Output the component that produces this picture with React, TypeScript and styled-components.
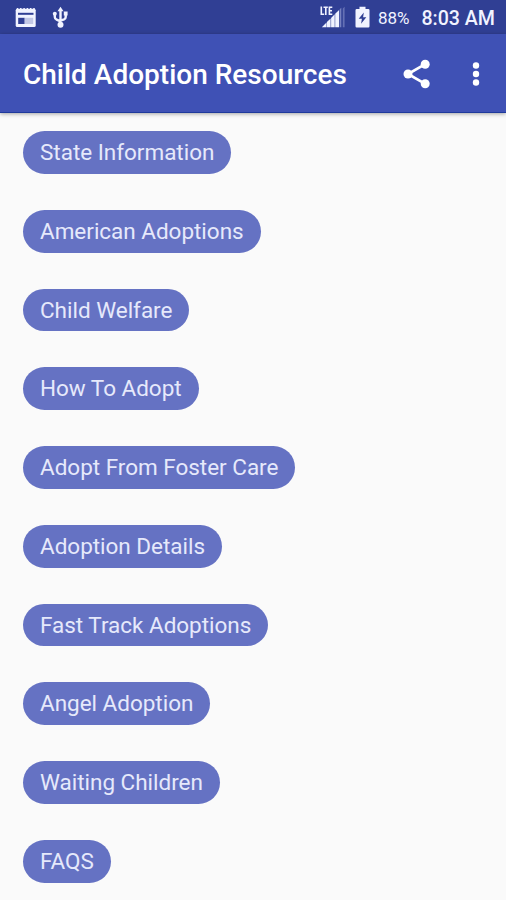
import React from "react";
import styled, { createGlobalStyle } from "styled-components";

const GlobalStyle = createGlobalStyle`
  * { box-sizing: border-box; }
  html, body { margin: 0; background: #fafafa; }
  body { font-family: Roboto, "Liberation Sans", sans-serif; overflow: hidden; }
`;

const Screen = styled.div`
  width: 506px;
  height: 900px;
  display: flex;
  flex-direction: column;
  overflow: hidden;
  background: #fafafa;
`;

const StatusBar = styled.header`
  height: 34px;
  flex: none;
  display: flex;
  align-items: center;
  padding: 0 11px 0 15px;
  background: #303f94;
  color: #f1f3ff;
`;

const StatusIcon = styled.svg<{ $gap: number }>`
  display: block;
  flex: none;
  margin-right: ${(p) => p.$gap}px;
`;

const Spacer = styled.div`
  flex: 1;
`;

const Battery = styled.span`
  width: 43.5px;
  font-size: 17px;
  line-height: 34px;
  padding-top: 2px;
  white-space: nowrap;
`;

const Clock = styled.time`
  font-size: 19.6px;
  font-weight: 500;
  line-height: 34px;
  padding-top: 4px;
  white-space: nowrap;
`;

const AppBar = styled.div`
  height: 79px;
  flex: none;
  display: flex;
  align-items: center;
  padding: 0 15px 0 23px;
  background: #3f51b5;
  border-bottom: 1px solid #1f3a9c;
  box-shadow: 0 1px 4px rgba(0, 0, 0, 0.35);
  z-index: 1;
`;

const Title = styled.h1`
  flex: 1;
  margin: 0;
  padding-top: 4px;
  font-size: 28px;
  font-weight: 500;
  line-height: 34px;
  color: #fff;
  white-space: nowrap;
`;

const IconButton = styled.button<{ $width: number }>`
  width: ${(p) => p.$width}px;
  height: 40px;
  padding: 1px 0 0;
  border: 0;
  background: none;
  display: flex;
  align-items: center;
  justify-content: center;
`;

const Actions = styled.div`
  display: flex;
  gap: 28px;
`;

const List = styled.main`
  display: flex;
  flex-direction: column;
  align-items: flex-start;
  gap: 36px;
  padding: 18px 23px;
`;

const Pill = styled.button`
  height: 42.75px;
  flex: none;
  padding: 0 17px 0.3px;
  border: 0;
  border-radius: 22px;
  background: #6572c3;
  color: #e6e9fb;
  font-family: inherit;
  font-size: 22.5px;
  letter-spacing: -0.02px;
  line-height: 28px;
  white-space: nowrap;
`;

const RESOURCES = [
  "State Information",
  "American Adoptions",
  "Child Welfare",
  "How To Adopt",
  "Adopt From Foster Care",
  "Adoption Details",
  "Fast Track Adoptions",
  "Angel Adoption",
  "Waiting Children",
  "FAQS",
];

const CalendarIcon = () => (
  <StatusIcon $gap={15} width="22" height="22" viewBox="0 0 22 22">
    <path d="M2.500 2v1.500M5.800 2v1.500M9.100 2v1.500M12.400 2v1.500M15.700 2v1.500M19 2v1.500" stroke="#f1f3ff" strokeWidth="1.500" />
    <rect x="0.700" y="2.800" width="20" height="18.200" rx="1.500" fill="#f1f3ff" />
    <rect x="3" y="6.800" width="15.500" height="2" fill="#303f94" />
    <rect x="3.200" y="11.800" width="6.500" height="6.200" fill="#303f94" />
    <rect x="9.700" y="11.800" width="8.500" height="6.200" fill="#c3c8e6" />
  </StatusIcon>
);

const UsbIcon = () => (
  <StatusIcon $gap={0} width="17" height="24" viewBox="0 0 17 24">
    <g fill="none" stroke="#f1f3ff" strokeWidth="2.400">
      <path d="M8.500 4v16M2.800 9v3q0 2 1.800 2.700l3.900 1.700M13.700 8v4q0 1.800-1.600 2.400l-3.600 1.200" />
    </g>
    <g fill="#f1f3ff">
      <path d="M8.500 1.800l3 4.400h-6z" />
      <circle cx="2.800" cy="8.800" r="2" />
      <path d="M11.800 6.500h3.800v4h-3.800z" />
      <circle cx="8.500" cy="19.800" r="3" />
    </g>
  </StatusIcon>
);

const SignalIcon = () => (
  <StatusIcon $gap={9} width="26" height="24" viewBox="0 0 26 24">
    <g fill="none" stroke="#f1f3ff" strokeWidth="1.600">
      <path d="M1.300 1.500v7.700h2.900M3.500 2.300h4.300M5.800 2.300V10M12.300 2.300H9.400v6.900h2.900M9.400 5.800h2.600" />
    </g>
    <g fill="#f1f3ff">
      <path d="M1.800 22.200l4.700-4.700v4.700zM6.900 17.100l3.700-3.700v8.800H6.900zM11.100 12.900l3.600-3.600v12.900h-3.600zM15.200 8.800l3.900-3.900v17.300h-3.900z" />
    </g>
    <path d="M19.700 4.300l1.600-1.600v19.500h-1.600z" fill="#7681c0" />
    <path d="M22.800 3.500l1.800-1.800v20.500h-1.800z" fill="#6470b4" />
  </StatusIcon>
);

const BatteryIcon = () => (
  <StatusIcon $gap={8} width="15" height="22" viewBox="0 0 15 22">
    <path d="M4.500 .7h6v2.300h2.800q1.200 0 1.200 1.200v16q0 1.200-1.200 1.200H1.700Q.5 21.400.5 20.200v-16Q.5 3 1.700 3h2.800z" fill="#f1f3ff" />
    <path d="M8.800 6.500L3.700 12.700h3.200l-.8 5L11.300 11.200H8.100z" fill="#303f94" />
  </StatusIcon>
);

const ShareIcon = () => (
  <svg width="28" height="32" viewBox="0 0 28 32">
    <path d="M22.200 6.200L5 16l17.200 9.800" fill="none" stroke="#fff" strokeWidth="2.700" />
    <g fill="#fff">
      <circle cx="22.200" cy="6.200" r="4.500" />
      <circle cx="5" cy="16" r="4.500" />
      <circle cx="22.200" cy="25.800" r="4.500" />
    </g>
  </svg>
);

const MoreIcon = () => (
  <svg width="8" height="28" viewBox="0 0 8 28" fill="#fff">
    <circle cx="4" cy="5.500" r="3.200" />
    <circle cx="4" cy="14" r="3.200" />
    <circle cx="4" cy="22.500" r="3.200" />
  </svg>
);

export default function App() {
  return (
    <Screen>
      <GlobalStyle />
      <StatusBar>
        <CalendarIcon />
        <UsbIcon />
        <Spacer />
        <SignalIcon />
        <BatteryIcon />
        <Battery>88%</Battery>
        <Clock>8:03 AM</Clock>
      </StatusBar>
      <AppBar>
        <Title>Child Adoption Resources</Title>
        <Actions>
          <IconButton $width={32} aria-label="Share"><ShareIcon /></IconButton>
          <IconButton $width={30} aria-label="More options"><MoreIcon /></IconButton>
        </Actions>
      </AppBar>
      <List>
        {RESOURCES.map((label) => (
          <Pill key={label}>{label}</Pill>
        ))}
      </List>
    </Screen>
  );
}
